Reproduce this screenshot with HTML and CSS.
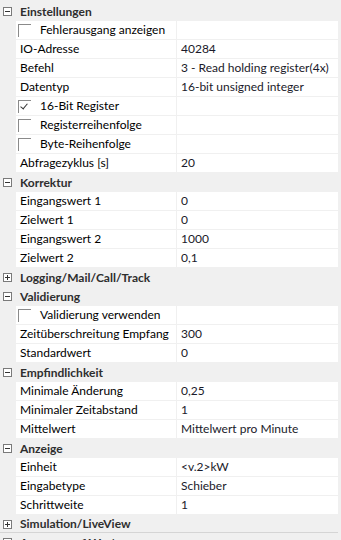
FILE: index.html
```html
<!DOCTYPE html>
<html lang="de">
<head>
    <meta charset="UTF-8">
    <meta name="viewport" content="width=device-width, initial-scale=1.0">
    <title>Eigenschaften</title>
    <link rel="stylesheet" href="styles.css">
</head>
<body>
    <div class="grid">
        <div class="cat"><span class="toggle open"></span>Einstellungen</div>
        <div class="prop"><div class="name"><span class="box"></span>Fehlerausgang anzeigen</div><div class="value"></div></div>
        <div class="prop"><div class="name">IO-Adresse</div><div class="value">40284</div></div>
        <div class="prop"><div class="name">Befehl</div><div class="value">3 - Read holding register(4x)</div></div>
        <div class="prop"><div class="name">Datentyp</div><div class="value">16-bit unsigned integer</div></div>
        <div class="prop"><div class="name"><span class="box checked"></span>16-Bit Register</div><div class="value"></div></div>
        <div class="prop"><div class="name"><span class="box"></span>Registerreihenfolge</div><div class="value"></div></div>
        <div class="prop"><div class="name"><span class="box"></span>Byte-Reihenfolge</div><div class="value"></div></div>
        <div class="prop"><div class="name">Abfragezyklus [s]</div><div class="value">20</div></div>

        <div class="cat"><span class="toggle open"></span>Korrektur</div>
        <div class="prop"><div class="name">Eingangswert 1</div><div class="value">0</div></div>
        <div class="prop"><div class="name">Zielwert 1</div><div class="value">0</div></div>
        <div class="prop"><div class="name">Eingangswert 2</div><div class="value">1000</div></div>
        <div class="prop"><div class="name">Zielwert 2</div><div class="value">0,1</div></div>

        <div class="cat"><span class="toggle"></span>Logging/Mail/Call/Track</div>

        <div class="cat"><span class="toggle open"></span>Validierung</div>
        <div class="prop"><div class="name"><span class="box"></span>Validierung verwenden</div><div class="value"></div></div>
        <div class="prop"><div class="name">Zeitüberschreitung Empfang</div><div class="value">300</div></div>
        <div class="prop"><div class="name">Standardwert</div><div class="value">0</div></div>

        <div class="cat"><span class="toggle open"></span>Empfindlichkeit</div>
        <div class="prop"><div class="name">Minimale Änderung</div><div class="value">0,25</div></div>
        <div class="prop"><div class="name">Minimaler Zeitabstand</div><div class="value">1</div></div>
        <div class="prop"><div class="name">Mittelwert</div><div class="value">Mittelwert pro Minute</div></div>

        <div class="cat"><span class="toggle open"></span>Anzeige</div>
        <div class="prop"><div class="name">Einheit</div><div class="value">&lt;v.2&gt;kW</div></div>
        <div class="prop"><div class="name">Eingabetype</div><div class="value">Schieber</div></div>
        <div class="prop"><div class="name">Schrittweite</div><div class="value">1</div></div>

        <div class="cat last"><span class="toggle"></span>Simulation/LiveView</div>
        <div class="cat"><span class="toggle"></span>Ausgang auf Wert</div>
    </div>
</body>
</html>
```

FILE: styles.css
```css
body {
    margin: 0;
    background: #f0f0f0;
    font-family: Lato, "Noto Sans", sans-serif;
    font-size: 12px;
    color: #000;
    overflow: hidden;
}
.grid {
    width: 338px;
    padding-top: 2px;
}
.cat {
    display: flex;
    align-items: center;
    height: 19px;
    padding-left: 20px;
    position: relative;
    font-weight: bold;
    color: #2e2e2e;
    white-space: nowrap;
}
.cat.last {
    border-bottom: 1px solid #d5d5d5;
    height: 17px;
}
.toggle {
    position: absolute;
    left: 3px;
    top: 5px;
    width: 7px;
    height: 7px;
    border: 1px solid #7a7a7a;
    background: #fff;
}
.toggle::before,
.toggle::after {
    content: "";
    position: absolute;
    background: #333;
}
.toggle::before {
    left: 1px;
    top: 3px;
    width: 5px;
    height: 1px;
}
.toggle::after {
    left: 3px;
    top: 1px;
    width: 1px;
    height: 5px;
}
.toggle.open::after {
    display: none;
}
.prop {
    display: grid;
    grid-template-columns: 160px 1fr;
    margin-left: 16px;
    height: 18px;
    background: #fff;
    border-bottom: 1px solid #f0f0f0;
    white-space: nowrap;
    line-height: 18px;
}
.name {
    padding-left: 4px;
    display: flex;
    align-items: center;
    overflow: hidden;
}
.value {
    padding-left: 4px;
    border-left: 1px solid #f0f0f0;
    overflow: hidden;
    color: #1a1a2a;
}
.box {
    width: 13px;
    height: 13px;
    margin-left: -2px;
    margin-right: 9px;
    box-sizing: border-box;
    border-top: 1px solid #8a8a8a;
    border-left: 1px solid #8a8a8a;
    position: relative;
    flex: none;
}
.box.checked::after {
    content: "";
    position: absolute;
    left: 3px;
    top: 1px;
    width: 3px;
    height: 6px;
    border-right: 1px solid #333;
    border-bottom: 1px solid #333;
    transform: rotate(40deg);
}
```
